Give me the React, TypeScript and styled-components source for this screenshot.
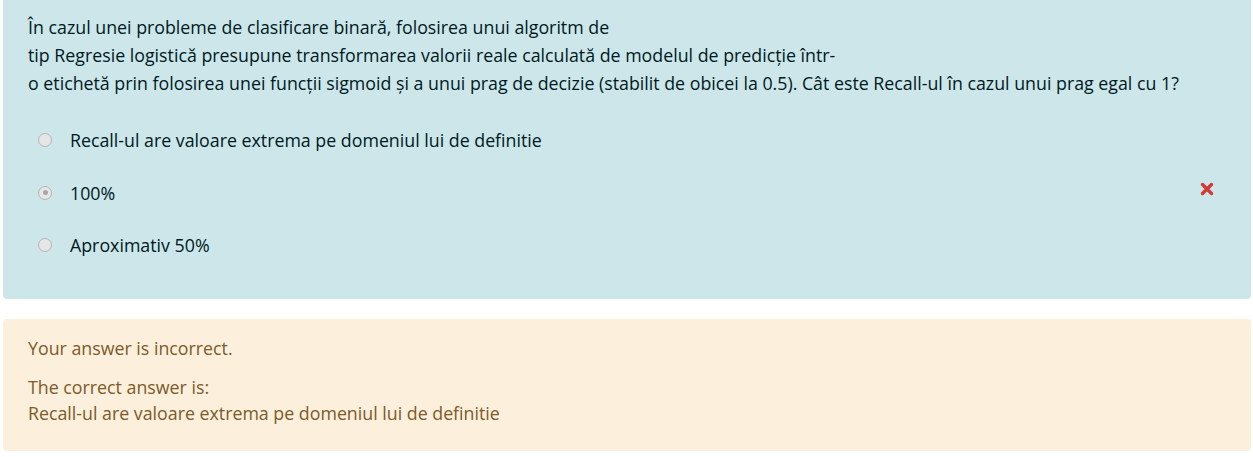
import { createGlobalStyle, styled } from 'styled-components'

const GlobalStyle = createGlobalStyle`
  html, body {
    margin: 0;
    padding: 0;
    background: #ffffff;
  }
  body {
    font-family: "Open Sans", "Noto Sans", sans-serif;
    font-size: 17.8px;
  }
`

interface Option {
  label: string
  checked?: boolean
  wrong?: boolean
}

const options: Option[] = [
  { label: 'Recall-ul are valoare extrema pe domeniul lui de definitie' },
  { label: '100%', checked: true, wrong: true },
  { label: 'Aproximativ 50%' },
]

function WrongIcon() {
  return (
    <svg width="14" height="14" viewBox="0 0 14 14">
      <path d="M2.5 2.5 L11.5 11.5 M11.5 2.5 L2.5 11.5" stroke="#d23a33" strokeWidth="3.4" strokeLinecap="round" />
    </svg>
  )
}

export default function App() {
  return (
    <>
      <GlobalStyle />
      <Page>
        <Formulation>
          <QuestionText>
            În cazul unei probleme de clasificare binară, folosirea unui algoritm de
            <br />
            tip Regresie logistică presupune transformarea valorii reale calculată de modelul de predicție într-
            <br />
            o etichetă prin folosirea unei funcții sigmoid și a unui prag de decizie (stabilit de obicei la 0.5). Cât
            este Recall-ul în cazul unui prag egal cu 1?
          </QuestionText>
          <Answers>
            {options.map((o) => (
              <AnswerRow key={o.label}>
                <Radio $checked={!!o.checked} />
                <AnswerLabel>{o.label}</AnswerLabel>
                {o.wrong && (
                  <Feedback>
                    <WrongIcon />
                  </Feedback>
                )}
              </AnswerRow>
            ))}
          </Answers>
        </Formulation>
        <Outcome>
          <OutcomeLine>Your answer is incorrect.</OutcomeLine>
          <RightAnswer>
            The correct answer is:
            <br />
            Recall-ul are valoare extrema pe domeniul lui de definitie
          </RightAnswer>
        </Outcome>
      </Page>
    </>
  )
}

const Page = styled.div`
  padding: 0 2px 0 3px;
  display: flex;
  flex-direction: column;
  gap: 20px;
`

const Formulation = styled.div`
  background-color: #cce6ea;
  color: #001a1e;
  border-radius: 0 0 4px 4px;
  padding: 13px 25px 27px 25px;
`

const QuestionText = styled.div`
  line-height: 28px;
  margin-bottom: 17px;
`

const Answers = styled.div`
  display: flex;
  flex-direction: column;
  padding-left: 10px;
`

const AnswerRow = styled.div`
  display: flex;
  align-items: center;
  height: 52.5px;
`

const Radio = styled.span<{ $checked: boolean }>`
  position: relative;
  width: 14px;
  height: 14px;
  box-sizing: border-box;
  border-radius: 50%;
  border: 1px solid #b5b5b5;
  background: #e6e6e6;
  margin-right: 18px;
  flex-shrink: 0;

  &::after {
    content: '';
    display: ${(p) => (p.$checked ? 'block' : 'none')};
    position: absolute;
    left: 3.5px;
    top: 3.5px;
    width: 5px;
    height: 5px;
    border-radius: 50%;
    background: #a8a8a8;
  }
`

const AnswerLabel = styled.span`
  flex: 1;
  line-height: 22px;
`

const Feedback = styled.span`
  display: flex;
  align-items: center;
  margin-right: 12px;
  margin-top: -8px;
`

const Outcome = styled.div`
  background-color: #fcefdc;
  color: #7d5a29;
  border-radius: 4px;
  padding: 16px 25px 25px 25px;
`

const OutcomeLine = styled.div`
  line-height: 26px;
  margin-bottom: 13px;
`

const RightAnswer = styled.div`
  line-height: 26px;
`
